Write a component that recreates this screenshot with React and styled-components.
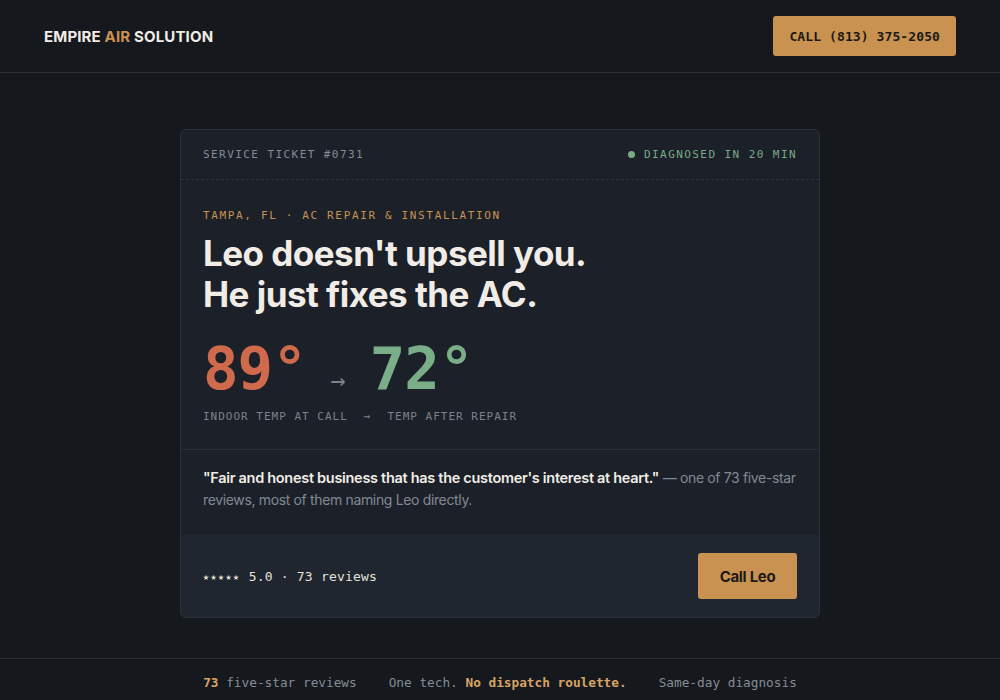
import React from "react";
import styled, { createGlobalStyle } from "styled-components";

const mono = `"DejaVu Sans Mono", "Liberation Mono", monospace`;
const sans = `Inter, "Noto Sans", "Liberation Sans", sans-serif`;

const GlobalStyle = createGlobalStyle`
  html, body {
    margin: 0;
    background: #15181d;
  }
  body {
    font-family: ${sans};
    color: #f1ede6;
  }
  * {
    box-sizing: border-box;
  }
`;

const App = () => {
  return (
    <>
      <GlobalStyle />
      <Page>
        <Header>
          <Logo>
            EMPIRE <span>AIR</span> SOLUTION
          </Logo>
          <PhoneButton>CALL (813) 375-2050</PhoneButton>
        </Header>

        <Main>
          <Ticket>
            <TicketTop>
              <Meta>SERVICE TICKET #0731</Meta>
              <Status>
                <Dot />
                DIAGNOSED IN 20 MIN
              </Status>
            </TicketTop>

            <TicketBody>
              <Eyebrow>TAMPA, FL · AC REPAIR &amp; INSTALLATION</Eyebrow>
              <Headline>
                Leo doesn't upsell you.
                <br />
                He just fixes the AC.
              </Headline>
              <Temps>
                <Temp tone="hot">89°</Temp>
                <TempArrow>→</TempArrow>
                <Temp tone="cool">72°</Temp>
              </Temps>
              <TempLabels>
                <span>INDOOR TEMP AT CALL</span>
                <span>→</span>
                <span>TEMP AFTER REPAIR</span>
              </TempLabels>
            </TicketBody>

            <Quote>
              <strong>
                "Fair and honest business that has the customer's interest at
                heart."
              </strong>{" "}
              — one of 73 five-star reviews, most of them naming Leo directly.
            </Quote>

            <TicketFooter>
              <Rating>
                <Stars>★★★★★</Stars> 5.0 · 73 reviews
              </Rating>
              <CallButton>Call Leo</CallButton>
            </TicketFooter>
          </Ticket>
        </Main>

        <Footer>
          <FootItem>
            <b>73</b> five-star reviews
          </FootItem>
          <FootItem>
            One tech. <b>No dispatch roulette.</b>
          </FootItem>
          <FootItem>Same-day diagnosis</FootItem>
        </Footer>
      </Page>
    </>
  );
};

const Page = styled.div`
  min-height: 100vh;
  display: flex;
  flex-direction: column;
`;

const Header = styled.header`
  height: 73px;
  padding: 0 44px;
  display: flex;
  align-items: center;
  justify-content: space-between;
  border-bottom: 1px solid #2a2f37;
`;

const Logo = styled.div`
  font-family: ${sans};
  font-weight: 700;
  font-size: 15px;
  letter-spacing: 0.15px;
  color: #f1ede6;

  span {
    color: #c99251;
  }
`;

const PhoneButton = styled.button`
  height: 40px;
  padding: 0 16px;
  border: none;
  border-radius: 3px;
  background: #c99251;
  color: #1b1a17;
  font-family: ${mono};
  font-weight: 700;
  font-size: 13px;
  letter-spacing: 0.1px;
  cursor: pointer;
`;

const Main = styled.main`
  display: flex;
  justify-content: center;
  padding: 56px 0 40px;
`;

const Ticket = styled.section`
  width: 640px;
  background: #1b2029;
  border: 1px solid #2b313a;
  border-radius: 6px;
  overflow: hidden;
`;

const TicketTop = styled.div`
  height: 50px;
  padding: 0 22px;
  display: flex;
  align-items: center;
  justify-content: space-between;
  border-bottom: 1px dashed #2f3540;
`;

const Meta = styled.div`
  font-family: ${mono};
  font-size: 11px;
  letter-spacing: 0.13em;
  color: #868c95;
`;

const Status = styled(Meta)`
  display: flex;
  align-items: center;
  gap: 9px;
  color: #7aab85;
`;

const Dot = styled.span`
  width: 7px;
  height: 7px;
  border-radius: 50%;
  background: #7aab85;
`;

const TicketBody = styled.div`
  padding: 29px 22px 26px;
  border-bottom: 1px solid #2b313a;
`;

const Eyebrow = styled.div`
  font-family: ${mono};
  font-size: 11px;
  letter-spacing: 0.15em;
  color: #c99251;
`;

const Headline = styled.h1`
  margin: 11px 0 0;
  font-family: ${sans};
  font-weight: 700;
  font-size: 35px;
  line-height: 41px;
  letter-spacing: -0.015em;
  color: #f1ede6;
`;

const Temps = styled.div`
  display: flex;
  align-items: baseline;
  gap: 24px;
  margin-top: 24px;
  line-height: 1;
`;

const Temp = styled.span`
  font-family: ${mono};
  font-weight: 700;
  font-size: 59px;
  letter-spacing: -1px;
  color: ${({ tone }) => (tone === "hot" ? "#d06a4c" : "#7aae88")};
`;

const TempArrow = styled.span`
  font-family: ${mono};
  font-size: 25px;
  color: #7d838c;
`;

const TempLabels = styled.div`
  display: flex;
  gap: 16px;
  margin-top: 12px;
  font-family: ${mono};
  font-size: 11px;
  letter-spacing: 1px;
  color: #7d838c;
`;

const Quote = styled.p`
  margin: 0;
  padding: 17px 22px 24px;
  font-family: ${sans};
  font-size: 14px;
  line-height: 22px;
  letter-spacing: -0.35px;
  color: #838993;

  strong {
    font-size: 14.5px;
    font-weight: 600;
    letter-spacing: -0.3px;
    color: #f1ede6;
  }
`;

const TicketFooter = styled.div`
  height: 82px;
  padding: 0 22px;
  display: flex;
  align-items: center;
  justify-content: space-between;
  background: #20262f;
`;

const Rating = styled.div`
  font-family: ${mono};
  font-size: 13px;
  letter-spacing: 0.2px;
  color: #e6e2da;
`;

const Stars = styled.span`
  font-size: 10px;
  letter-spacing: 1.5px;
  vertical-align: 1px;
`;

const CallButton = styled.button`
  width: 99px;
  height: 46px;
  border: none;
  border-radius: 3px;
  background: #c99251;
  color: #1b1a17;
  font-family: ${sans};
  font-weight: 700;
  font-size: 15px;
  letter-spacing: -0.02em;
  cursor: pointer;
`;

const Footer = styled.footer`
  border-top: 1px solid #2a2f37;
  padding: 16px 0;
  display: flex;
  justify-content: center;
  gap: 32px;
`;

const FootItem = styled.span`
  font-family: ${mono};
  font-size: 12.75px;
  color: #868c95;

  b {
    color: #d9a364;
    font-weight: 700;
  }
`;

export default App;
